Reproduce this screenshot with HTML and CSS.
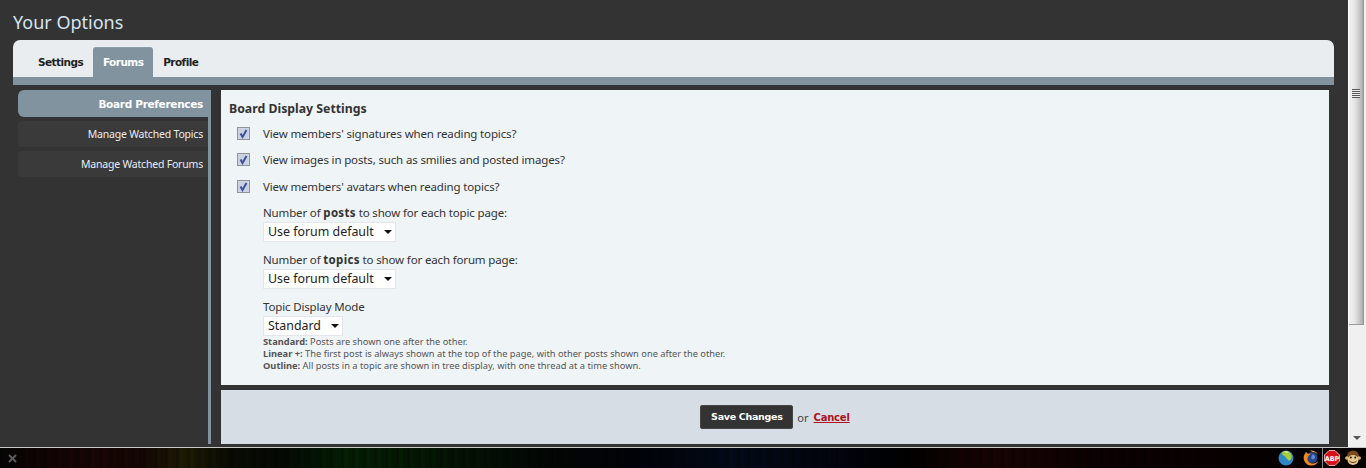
FILE: index.html
```html
<!DOCTYPE html>
<html lang="en">
<head>
<meta charset="utf-8">
<title>Your Options</title>
<link rel="stylesheet" href="styles.css">
</head>
<body>
<div class="window">
  <main class="page">
    <h1 class="title">Your Options</h1>
    <div class="shell">
      <nav class="tabs">
        <a class="tab">Settings</a>
        <a class="tab tab-active">Forums</a>
        <a class="tab">Profile</a>
      </nav>
      <div class="strip"></div>
    </div>
    <div class="columns">
      <aside class="side">
        <a class="side-item side-active">Board Preferences</a>
        <a class="side-item">Manage Watched Topics</a>
        <a class="side-item">Manage Watched Forums</a>
      </aside>
      <section class="content">
        <div class="panel">
          <h2 class="panel-title">Board Display Settings</h2>
          <div class="check-row r1"><span class="check"><svg width="13" height="13" viewBox="0 0 13 13"><rect x=".5" y=".5" width="12" height="12" fill="#d5dbe6" stroke="#8f9296"/><rect x="1.5" y="1.5" width="10" height="10" fill="#c9d1e0"/><path d="M3.500 6.500 5.500 10 9.500 3" fill="none" stroke="#3d4f9f" stroke-width="2"/></svg></span><span class="label">View members' signatures when reading topics?</span></div>
          <div class="check-row r2"><span class="check"><svg width="13" height="13" viewBox="0 0 13 13"><rect x=".5" y=".5" width="12" height="12" fill="#d5dbe6" stroke="#8f9296"/><rect x="1.5" y="1.5" width="10" height="10" fill="#c9d1e0"/><path d="M3.500 6.500 5.500 10 9.500 3" fill="none" stroke="#3d4f9f" stroke-width="2"/></svg></span><span class="label">View images in posts, such as smilies and posted images?</span></div>
          <div class="check-row r3"><span class="check"><svg width="13" height="13" viewBox="0 0 13 13"><rect x=".5" y=".5" width="12" height="12" fill="#d5dbe6" stroke="#8f9296"/><rect x="1.5" y="1.5" width="10" height="10" fill="#c9d1e0"/><path d="M3.500 6.500 5.500 10 9.500 3" fill="none" stroke="#3d4f9f" stroke-width="2"/></svg></span><span class="label">View members' avatars when reading topics?</span></div>
          <div class="field">
            <div class="label">Number of <b>posts</b> to show for each topic page:</div>
            <div class="select">Use forum default<i class="caret"></i></div>
          </div>
          <div class="field">
            <div class="label">Number of <b>topics</b> to show for each forum page:</div>
            <div class="select">Use forum default<i class="caret"></i></div>
          </div>
          <div class="field">
            <div class="label">Topic Display Mode</div>
            <div class="select">Standard<i class="caret"></i></div>
            <p class="hint"><b>Standard:</b> Posts are shown one after the other.<br><b>Linear +:</b> The first post is always shown at the top of the page, with other posts shown one after the other.<br><b>Outline:</b> All posts in a topic are shown in tree display, with one thread at a time shown.</p>
          </div>
        </div>
        <div class="actions">
          <button class="save">Save Changes</button>
          <span class="or">or</span>
          <a class="cancel">Cancel</a>
        </div>
      </section>
    </div>
  </main>
  <div class="scrollbar">
    <div class="thumb"><span class="grip"></span></div>
    <div class="track"><i class="down"></i></div>
  </div>
</div>
<footer class="addon-bar">
  <span class="close">
    <svg width="9" height="9" viewBox="0 0 9 9"><path d="M1 1 8 8M8 1 1 8" stroke="#5c5c5c" stroke-width="2"/></svg>
  </span>
  <span class="bar-icons">
    <svg class="ico-globe" width="16" height="16" viewBox="0 0 16 16"><circle cx="8" cy="8" r="7.500" fill="#2f86c8"/><path d="M4 2.500c3-2 7-1.500 9 1.500 1.500 2.500.5 5.500-2 7-1-1.500-2.500-2-3-3.500S3.500 5.500 4 2.500Z" fill="#a4cf3a"/><path d="M6 1.500c2-.6 4 0 5 1-1.500.5-3.500.5-5-1Z" fill="#e4ee9a"/></svg>
    <svg class="ico-fox" width="16" height="16" viewBox="0 0 16 16"><circle cx="9" cy="7.500" r="5.500" fill="#27458f"/><path d="M9.500 4.500c2 .5 3 2 2.500 3.500-.5 1-2 1.500-3 1-1-.5-1-2 .5-4.500Z" fill="#5f8ed0"/><path d="M3 2c-2 2.500-3 5.500-2 8 1 3.500 4 5.500 7.500 5.500 3.500 0 6-2 7-5-1.500 2-4 3.500-6.500 3C6 13 4 10.500 4.500 8c.3-1.500 1.500-3 3.500-4 -1-.5-2-.5-3 0C4.500 3.500 4 2.500 3 2Z" fill="#ee8a1c"/><path d="M7 .8c2.500-.6 6 .2 8 3.700-1.500-1.500-3-2.500-5-2.500C9 2 8 1.500 7 .8Z" fill="#f0a030"/></svg>
    <span class="sep"></span>
    <svg class="ico-abp" width="16" height="16" viewBox="0 0 16 16"><path d="M5 .5h6L15.500 5v6L11 15.500H5L.5 11V5Z" fill="#d8121a" stroke="#f0a8a8"/><text x="8" y="10.500" text-anchor="middle" class="abp">ABP</text></svg>
    <svg class="ico-monkey" width="16" height="16" viewBox="0 0 16 16"><circle cx="8" cy="6.500" r="6" fill="#7a4a1c"/><circle cx="1.800" cy="8" r="1.800" fill="#d9b070"/><circle cx="14.200" cy="8" r="1.800" fill="#d9b070"/><ellipse cx="8" cy="10" rx="5.500" ry="5" fill="#e9c98a"/><circle cx="5.800" cy="7.500" r="1" fill="#1c1208"/><circle cx="10.200" cy="7.500" r="1" fill="#1c1208"/><path d="M4.500 11c2.200 2 4.800 2 7 0" stroke="#4a2c10" fill="none"/></svg>
  </span>
</footer>
</body>
</html>
```
FILE: styles.css
```css
* { box-sizing: border-box; }
html, body { margin: 0; height: 468px; overflow: hidden; background: #333; }
body { font-family: "Noto Sans", "DejaVu Sans", sans-serif; }
a { text-decoration: none; }

.window { display: flex; height: 447px; background: #333; }
.page { width: 1348px; flex: none; padding: 0 14px 0 13px; }

.title { margin: 0; height: 40px; padding-top: 10px; font-size: 18px; line-height: 24px; font-weight: 400; color: #d6e4f0; }

.shell { height: 45px; background: #e9edf0; border-radius: 7px 7px 0 0; display: flex; flex-direction: column; }
.tabs { height: 37px; display: flex; padding: 7px 0 0 15px; }
.tab { height: 30px; padding: 0 10px; font: 700 10.500px/31px "DejaVu Sans", sans-serif; letter-spacing: -.55px; color: #222; }
.tab-active { background: #81939f; color: #fff; border-radius: 3px 3px 0 0; width: 60px; padding: 0; text-align: center; border-top: 1px solid #8d9ea9; line-height: 29px; }
.strip { height: 8px; background: #81939f; }

.columns { display: flex; height: 354px; margin-top: 5px; padding: 0 5px; }
.side { width: 193px; flex: none; border-right: 3px solid #81939f; display: flex; flex-direction: column; gap: 4px; }
.side-item { height: 26px; padding-right: 5px; text-align: right; font: 400 10.500px/26px "Noto Sans", sans-serif; letter-spacing: -.2px; color: #e8edf2; background: #3a3a3a; border-radius: 4px 0 0 4px; }
.side-active { height: 27px; margin-right: -3px; padding-right: 8px; background: #81939f; color: #fff; font: 700 10.500px/28px "DejaVu Sans", sans-serif; letter-spacing: -.3px; border-radius: 6px 0 0 6px; }

.content { flex: 1; margin-left: 10px; display: flex; flex-direction: column; }
.panel { height: 295px; background: #eff4f7; padding: 10px 8px 0; }
.panel-title { margin: 0; font: 700 12.300px/18px "Noto Sans", sans-serif; color: #333; }

.check-row { display: flex; align-items: center; height: 18px; }
.r1 { margin-top: 6px; }
.r2 { margin-top: 8px; }
.r3 { margin-top: 9px; }
.check { width: 13px; height: 13px; margin: 1px 13px 0 8px; flex: none; display: flex; }
.label { font-size: 11.500px; line-height: 17px; letter-spacing: -.15px; color: #333; }
.label b { font-weight: 700; letter-spacing: .3px; }

.field { margin: 9px 0 0 34px; }
.select { display: flex; width: fit-content; align-items: center; height: 20px; margin-top: 1px; background: #fff; border: 1px solid #e3e7eb; padding: 0 3px 0 4px; font: 400 12.400px/18px "Noto Sans", sans-serif; color: #222; }
.caret { width: 0; height: 0; margin-left: 10px; border: 4px solid transparent; border-top-color: #111; border-bottom: 0; }
.hint { margin: 0; font: 400 9.300px/12px "Noto Sans", sans-serif; color: #555; }
.hint b { font-weight: 700; }

.actions { height: 54px; margin-top: 5px; background: #d6dde4; display: flex; align-items: center; justify-content: center; gap: 5px; }
.save { height: 24px; width: 93px; margin-right: -1px; padding: 0; background: #333; color: #fff; border: 1px solid #444; border-radius: 2px; font: 700 9.500px/22px "DejaVu Sans", sans-serif; letter-spacing: -.3px; }
.or { font-size: 11px; color: #444; }
.cancel { font: 700 10px "DejaVu Sans", sans-serif; letter-spacing: -.2px; color: #b0121c; text-decoration: underline; }

.scrollbar { width: 18px; flex: none; border-left: 1px solid #fff; background: #f0f0f0; display: flex; flex-direction: column; }
.thumb { height: 325px; margin-right: 2px; border-right: 1px solid #999; border-bottom: 1px solid #999; background: linear-gradient(90deg, #f2f2f2, #e6e6e6 40%, #c8c8c8 75%, #a8a8a8); display: flex; justify-content: center; padding-top: 89px; }
.grip { width: 8px; height: 9px; background: repeating-linear-gradient(180deg, #555 0 1px, #eee 1px 2px); }
.track { flex: 1; position: relative; }
.down { position: absolute; left: 4px; bottom: 7px; width: 0; height: 0; border: 4px solid transparent; border-top-color: #555; border-bottom: 0; }

.addon-bar { height: 21px; border-top: 1px solid #c8c8c8; background: repeating-linear-gradient(90deg, rgba(0,0,0,.25) 0 3px, rgba(0,0,0,0) 3px 7px, rgba(0,0,0,.15) 7px 11px), linear-gradient(90deg, #050505 0, #0f0404 30px, #1a0505 100px, #140704 140px, #1f1c03 185px, #0a0c03 230px, #040a03 280px, #042003 350px, #041a04 410px, #041005 480px, #020604 555px, #01020a 640px, #020a18 730px, #02040e 840px, #000 905px, #120202 960px, #180303 1010px, #0c0101 1100px, #050000 1366px); display: flex; align-items: center; justify-content: space-between; padding: 0 5px 0 8px; }
.close { display: flex; }
.bar-icons { display: flex; align-items: center; }
.ico-fox { margin-left: 9px; }
.sep { width: 1px; height: 20px; background: #888; margin: 0 1px 0 3px; }
.ico-monkey { margin-left: 5px; }
.abp { font: 700 6.500px "DejaVu Sans", sans-serif; fill: #fff; }
```
